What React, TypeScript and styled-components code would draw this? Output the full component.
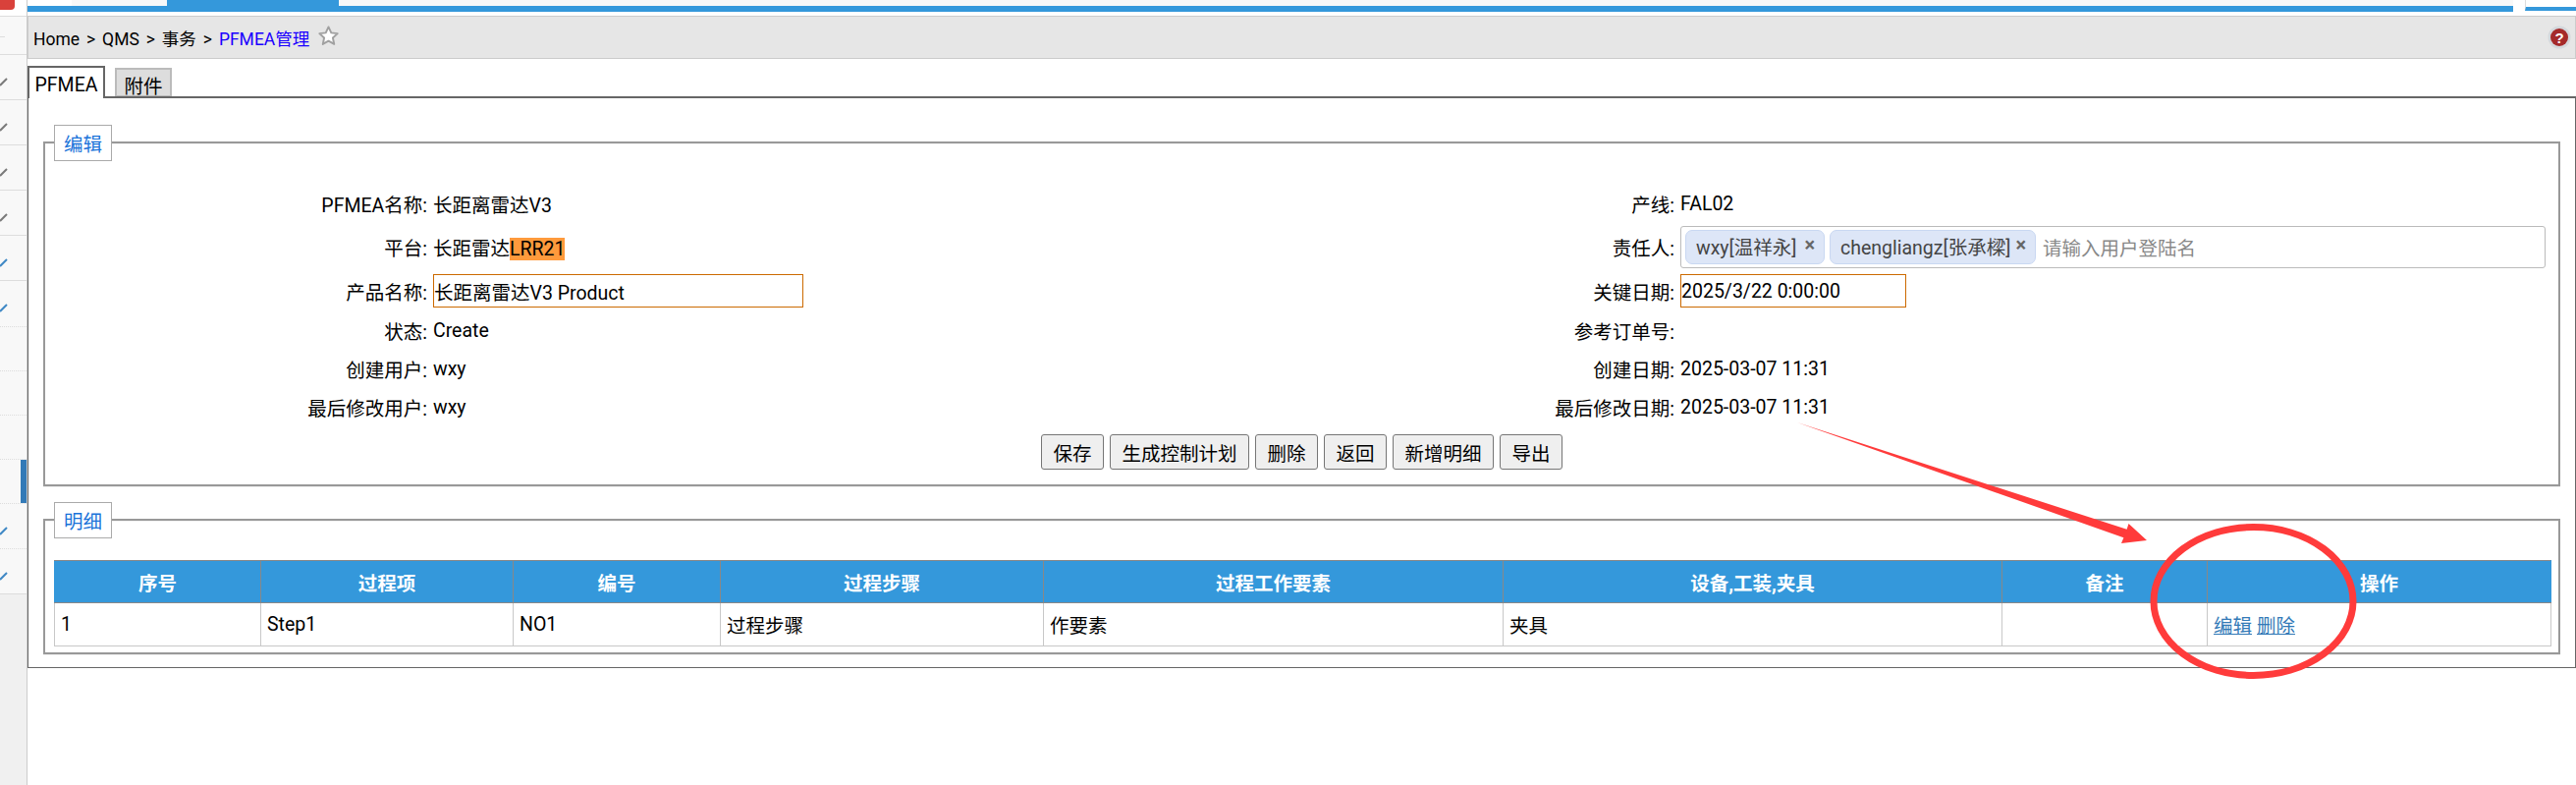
import React from "react";
import styled, { createGlobalStyle } from "styled-components";

const Global = createGlobalStyle`
  html, body { margin: 0; padding: 0; background: #fff; overflow: hidden; }
  body { font-family: Roboto, "Noto Sans CJK SC", sans-serif; font-size: 19.5px; color: #000; }
  #root { height: 799px; }
  * { box-sizing: border-box; }
`;
const Page = styled.div`position: relative; display: flex; width: 2623px; height: 799px; overflow: hidden;`;
const Sidebar = styled.aside`width: 28px; flex: none; background: #f0f0f0; border-right: 1px solid #ccc; display: flex; flex-direction: column;`;
const SideTop = styled.div`height: 17px; background: #fff; border-bottom: 1px solid #ddd;`;
const RedMark = styled.div`width: 15px; height: 10px; background: #d9413b; border-radius: 0 0 4px 0;`;
const SideRow = styled.div<{ $dotted?: boolean; $h: number; $rule?: boolean }>`
  position: relative; height: ${p => p.$h}px; background: #f8f8f8;
  border-bottom: 1px ${p => (p.$dotted ? "dotted" : "solid")} #ddd;
  svg { display: block; position: absolute; left: 0; top: 50%; margin-top: -2px; }
  ${p => p.$rule ? `&::after { content: ""; position: absolute; left: 0; top: 20px; width: 5px; height: 1px; background: #ddd; }` : ""}
`;
const ActiveBar = styled.div`position: absolute; right: 0; top: 0; bottom: 0; width: 6px; background: #337ab7;`;
const Main = styled.main`flex: 1; min-width: 0; display: flex; flex-direction: column;`;
const TabStrip = styled.div`display: flex; height: 12px; border-bottom: 6px solid #3498db; margin-right: 64px; background: #f8f8f8;`;
const StripTab = styled.div<{ $w: number; $c: string }>`width: ${p => p.$w}px; height: 6px; background: ${p => p.$c};`;
const StripRight = styled.div`position: absolute; right: 0; top: 0; width: 52px; height: 11px; border-left: 1px solid #ddd; border-bottom: 4px solid #3498db; background: #fff;`;
const Crumb = styled.nav`display: flex; align-items: center; height: 44px; margin-top: 4px; padding: 0 4px 0 5px; background: #e6e6e6; border: 1px solid #ccc; font-size: 17.5px; white-space: pre;`;
const CrumbPath = styled.span`word-spacing: 2.6px;`;
const CrumbLink = styled.span`color: #1a00ff;`;
const Star = styled.svg`margin-left: 8px; margin-top: -4px;`;
const Help = styled.svg`margin-left: auto;`;
const Tabs = styled.div`display: flex; align-items: flex-end; height: 29px; margin-top: 9px; position: relative; z-index: 1;`;
const Tab = styled.div<{ $active?: boolean }>`
  height: ${p => (p.$active ? 33 : 29)}px; width: ${p => (p.$active ? 79 : 58)}px; margin-right: 10px; flex: none;
  display: flex; align-items: center; justify-content: center;
  background: ${p => (p.$active ? "#fff" : "#ddd")};
  border: 2px solid ${p => (p.$active ? "#666" : "#bbb")};
  border-bottom: ${p => (p.$active ? "none" : "1px solid #bbb")};
  margin-bottom: ${p => (p.$active ? "-2px" : "0")};
  padding-top: 4px;
`;
const Panel = styled.section`height: 582px; border: 1px solid #666; border-top-width: 2px; padding: 0 15px;`;
const Box = styled.fieldset<{ $h: number; $top: number }>`
  margin: ${p => p.$top}px 0 0; padding: 0; height: ${p => p.$h}px; border: 2px solid #999; border-radius: 0; position: relative;
  box-shadow: 0 1px 0 #eee, inset 0 1px 0 #f2f2f2;
`;
const Legend = styled.div`
  position: absolute; left: 9px; top: -19px; width: 59px; height: 37px; background: #fff; border: 1px solid #aaa;
  color: #1a73d9; display: flex; align-items: center; justify-content: center;
`;
const Form = styled.div`
  display: grid; margin-top: 41px;
  grid-template-columns: 389px 880px 378px 881px; column-gap: 6px;
  grid-template-rows: 40px 48px 42px 39px 38px 40px; align-items: center;
`;
const Label = styled.div`text-align: right; white-space: nowrap;`;
const Value = styled.div`white-space: nowrap;`;
const Hl = styled.span`background: #ff9a3c;`;
const TextInput = styled.div<{ $w: number }>`width: ${p => p.$w}px; height: 34px; border: 1px solid #cc6a00; display: flex; align-items: center; white-space: nowrap;`;
const TagBox = styled.div`height: 43px; border: 1px solid #bbb; border-radius: 3px; padding: 0 4px; display: flex; align-items: center; gap: 5px;`;
const Tag = styled.div<{ $w: number }>`width: ${p => p.$w}px; height: 35px; border: 1px solid #c9d8f2; border-radius: 7px; background: #dde6f7; color: #444; display: flex; align-items: center; justify-content: space-between; padding: 0 9px 2px 10px; white-space: nowrap;`;
const Close = styled.span`color: #666; font-size: 20px; font-weight: 700; margin-top: -3px;`;
const Placeholder = styled.span`color: #888; margin-left: 2px;`;
const Actions = styled.div`display: flex; justify-content: center; gap: 6px; margin-top: 8px;`;
const Btn = styled.button`height: 36px; padding: 0 11.5px; background: #efefef; border: 1px solid #767676; border-radius: 3px; font: inherit; color: #000;`;
const Table = styled.table`position: absolute; left: 9px; top: 40px; width: 2542px; border-collapse: collapse; table-layout: fixed;`;
const Th = styled.th`height: 43px; padding: 0; background: #3498db; color: #fff; font-weight: 700; border: 1px solid #888; &:first-child { border-left-color: #3498db; } &:last-child { border-right-color: #3498db; }`;
const Td = styled.td`height: 44px; padding: 0 6px; border: 1px solid #c8c8c8; text-align: left;`;
const OpLink = styled.a`color: #337ab7; text-decoration: underline; margin-right: 5px;`;
const Overlay = styled.svg`position: absolute; left: 0; top: 0; pointer-events: none;`;

const gray = "#7a7a7a";
const blue = "#3f88c5";
const rows: [number, boolean, string | null][] = [
  [39, false, null], [46, false, gray], [46, false, gray], [46, false, gray], [46, false, gray], [46, false, blue], [47, true, blue],
  [45, true, null], [45, true, null], [45, true, null], [45, true, "bar"], [46, true, blue], [46, false, blue],
];
const cols = [210, 257, 211, 329, 468, 508, 209, 350];
const heads = ["序号", "过程项", "编号", "过程步骤", "过程工作要素", "设备,工装,夹具", "备注", "操作"];
const cells = ["1", "Step1", "NO1", "过程步骤", "作要素", "夹具", ""];
const buttons = ["保存", "生成控制计划", "删除", "返回", "新增明细", "导出"];

export default function App() {
  return (
    <Page>
      <Global />
      <Sidebar>
        <SideTop><RedMark /></SideTop>
        {rows.map(([h, dotted, mark], i) => (
          <SideRow key={i} $h={h} $dotted={dotted} $rule={i === 0}>
            {mark === "bar" ? <ActiveBar /> : mark ? (
              <svg width="10" height="12" viewBox="0 0 10 12"><path d="M0 10 L7 3" stroke={mark} strokeWidth="2" fill="none" /></svg>
            ) : null}
          </SideRow>
        ))}
      </Sidebar>
      <Main>
        <TabStrip>
          <StripTab $w={45} $c="#fff" />
          <StripTab $w={97} $c="#f8f8f8" />
          <StripTab $w={175} $c="#3498db" />
        </TabStrip>
        <StripRight />
        <Crumb>
          <CrumbPath>Home &gt; QMS &gt; 事务 &gt; </CrumbPath>
          <CrumbLink>PFMEA管理</CrumbLink>
          <Star width="23" height="23" viewBox="0 0 24 24">
            <path d="M12 2.5l2.9 6.2 6.7.8-5 4.6 1.4 6.7-6-3.4-6 3.4 1.4-6.7-5-4.6 6.7-.8z" fill="#fff" stroke="#a0a0a0" strokeWidth="2" strokeLinejoin="round" />
          </Star>
          <Help width="24" height="24" viewBox="0 0 24 24">
            <circle cx="12" cy="12" r="11.5" fill="#d4d8dc" />
            <circle cx="12" cy="12" r="9" fill="#a52a2a" />
            <text x="12" y="17.5" textAnchor="middle" fontSize="15" fontWeight="700" fill="#fff" fontFamily="Liberation Sans, sans-serif">?</text>
          </Help>
        </Crumb>
        <Tabs>
          <Tab $active>PFMEA</Tab>
          <Tab>附件</Tab>
        </Tabs>
        <Panel>
          <Box $h={351} $top={44}>
            <Legend>编辑</Legend>
            <Form>
              <Label>PFMEA名称:</Label><Value>长距离雷达V3</Value>
              <Label>产线:</Label><Value>FAL02</Value>
              <Label>平台:</Label><Value>长距雷达<Hl>LRR21</Hl></Value>
              <Label>责任人:</Label>
              <TagBox>
                <Tag $w={142}>wxy[温祥永]<Close>×</Close></Tag>
                <Tag $w={210}>chengliangz[张承樑]<Close>×</Close></Tag>
                <Placeholder>请输入用户登陆名</Placeholder>
              </TagBox>
              <Label>产品名称:</Label><TextInput $w={377}>长距离雷达V3 Product</TextInput>
              <Label>关键日期:</Label><TextInput $w={230}>2025/3/22 0:00:00</TextInput>
              <Label>状态:</Label><Value>Create</Value>
              <Label>参考订单号:</Label><Value />
              <Label>创建用户:</Label><Value>wxy</Value>
              <Label>创建日期:</Label><Value>2025-03-07 11:31</Value>
              <Label>最后修改用户:</Label><Value>wxy</Value>
              <Label>最后修改日期:</Label><Value>2025-03-07 11:31</Value>
            </Form>
            <Actions>{buttons.map(b => <Btn key={b}>{b}</Btn>)}</Actions>
          </Box>
          <Box $h={138} $top={33}>
            <Legend>明细</Legend>
            <Table>
              <colgroup>{cols.map((w, i) => <col key={i} style={{ width: w }} />)}</colgroup>
              <thead><tr>{heads.map(h => <Th key={h}>{h}</Th>)}</tr></thead>
              <tbody>
                <tr>
                  {cells.map((c, i) => <Td key={i}>{c}</Td>)}
                  <Td><OpLink>编辑</OpLink><OpLink>删除</OpLink></Td>
                </tr>
              </tbody>
            </Table>
          </Box>
        </Panel>
      </Main>
      <Overlay width="2623" height="799" viewBox="0 0 2623 799">
        <path d="M1830 430 L2165.6 538.8 L2167.5 533 L2186 550 L2160 553 L2162.4 547.2 Z" fill="#ff3b3b" />
        <ellipse cx="2294.5" cy="612" rx="101.5" ry="75.5" fill="none" stroke="#ff3b3b" strokeWidth="7" />
      </Overlay>
    </Page>
  );
}
